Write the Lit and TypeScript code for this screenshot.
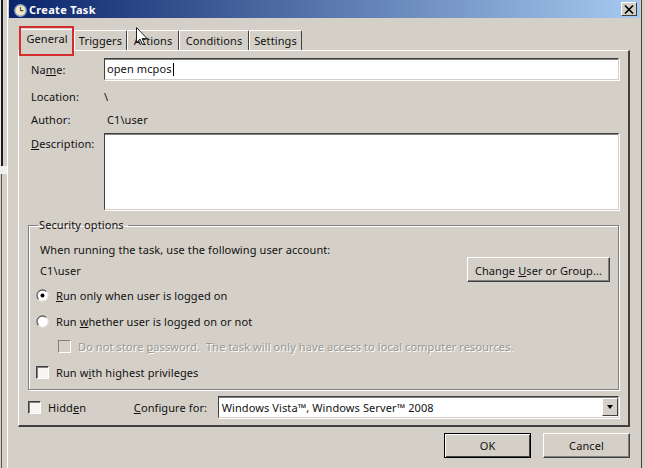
import { LitElement, html, css, svg } from "lit";
import { customElement } from "lit/decorators.js";

@customElement("app-root")
export class AppRoot extends LitElement {
  static styles = css`
    :host { display: block; width: 645px; height: 468px; overflow: hidden; background: #d4d0c8; font: 11px "Noto Sans", sans-serif; letter-spacing: 0.1px; color: #111; }
    * { box-sizing: border-box; }
    u { text-underline-offset: 1px; }
    .win { width: 645px; height: 468px; display: flex; position: relative; }
    .strip { width: 9px; flex: none; display: flex; flex-direction: column; }
    .s1 { height: 166px; background: linear-gradient(90deg, #e8e8e8 1px, #1c1c1c 1px, #1c1c1c 3px, #d4d0c8 3px, #d4d0c8 7px, #fff 7px, #fff 8px, #d4d0c8 8px); }
    .s2 { height: 8px; background: linear-gradient(90deg, #f0f0f0 7px, #fff 7px, #fff 8px, #d4d0c8 8px); }
    .s3 { flex: 1; background: linear-gradient(90deg, #d4d0c8 1px, #555 1px, #555 2px, #d4d0c8 2px, #d4d0c8 7px, #fff 7px, #fff 8px, #d4d0c8 8px); }
    .wrap { height: 468px; border-right: 1px solid #404040; padding-right: 1px; width: 633px; display: flex; flex-direction: column; }
    .title { height: 18px; background: linear-gradient(90deg, #0a246a, #a6caf0); color: #fff; font: bold 11px "Noto Sans", sans-serif; letter-spacing: 0.3px; display: flex; align-items: center; padding: 0 3px 0 5px; gap: 2px; }
    .title .t { flex: 1; }
    .title svg.clock { margin-top: 3px; }
    .close { width: 16px; height: 14px; background: #d4d0c8; border: 1px solid; border-color: #fff #404040 #404040 #fff; display: flex; align-items: center; justify-content: center; }
    .body { flex: 1; padding: 9px 10px 0 9px; display: flex; flex-direction: column; }
    .tabs { display: flex; height: 23px; padding-left: 2px; position: relative; align-items: flex-end; }
    .tab { height: 20px; padding: 2px 0 0; text-align: center; background: #d4d0c8; border: 1px solid; border-color: #fff #404040 transparent #fff; border-bottom: none; border-radius: 2px 2px 0 0; white-space: nowrap; line-height: 16px; flex: none; }
    .t1 { width: 53px; }
    .t2 { width: 52px; }
    .t3 { width: 70px; }
    .t4 { width: 53px; }
    .tab.on { height: 22px; width: 54px; margin-bottom: -1px; padding-top: 1px; z-index: 1; border-right-color: #808080; }
    .mark { position: absolute; left: 1px; top: -1px; width: 55px; height: 30px; border: 2px solid #d22c2c; z-index: 2; pointer-events: none; }
    .pane { width: 612px; height: 377px; border: 1px solid; border-color: #fff #404040 #404040 #fff; border-width: 1px 2px 2px 1px; padding: 7px 9px 0 9px; display: flex; flex-direction: column; }
    .row { display: flex; align-items: center; }
    .lbl { width: 76px; flex: none; padding-left: 3px; }
    .input { background: #fff; border: 1px solid; border-color: #404040 #d4d0c8 #d4d0c8 #404040; box-shadow: inset 0 1px 0 #808080, 1px 1px 0 #fff; }
    .name { width: 515px; height: 22px; padding: 0 2px; line-height: 18px; display: flex; align-items: center; }
    .caret { width: 1px; height: 13px; background: #000; margin-left: 1px; }
    .r1 { margin-bottom: 8px; }
    .r2 { height: 16px; margin-bottom: 7px; }
    .r3 { height: 16px; margin-bottom: 6px; }
    .desc { width: 515px; height: 77px; }
    .r4 { align-items: flex-start; margin-bottom: 8px; }
    .r4 .lbl { padding-top: 3px; }
    fieldset { margin: 0; width: 591px; height: 172px; padding: 0; border: 1px solid #808080; box-shadow: inset 1px 1px 0 #fff, 1px 1px 0 #fff; }
    legend { margin-left: 9px; padding: 0 4px 0 1px; line-height: 14px; }
    .in { padding: 10px 8px 0 11px; display: flex; flex-direction: column; }
    .when { height: 20px; }
    .acct { display: flex; justify-content: space-between; align-items: flex-start; height: 24px; }
    .acct span { padding-top: 1px; }
    .btn { background: #d4d0c8; border: 1px solid; border-color: #fff #404040 #404040 #fff; box-shadow: inset -1px -1px 0 #808080; display: flex; align-items: center; justify-content: center; }
    .change { width: 143px; height: 25px; margin-top: -5px; flex: none; }
    .radio, .check { display: flex; align-items: center; }
    .dot { width: 13px; height: 13px; flex: none; margin-right: 7px; }
    .box { width: 13px; height: 13px; flex: none; background: #f6f5f2; border: 1px solid; border-color: #404040 #fff #fff #404040; box-shadow: inset 1px 1px 0 #808080; }
    .rr { height: 16px; margin-left: -4px; }
    .m1 { margin-top: 1px; margin-bottom: 10px; }
    .m2 { margin-bottom: 9px; }
    .dis { color: #9a978f; text-shadow: 1px 1px 0 #fff; padding-left: 22px; height: 16px; margin-bottom: 10px; margin-left: -4px; }
    .dis .box { margin-right: 8px; background: #d4d0c8; border-color: #808080 #fff #fff #808080; box-shadow: none; }
    .check .box { margin-right: 7px; }
    .foot { display: flex; align-items: center; height: 22px; margin-top: 6px; }
    .foot .check { width: 106px; }
    .cfg { width: 84px; }
    .select { width: 402px; height: 22px; display: flex; align-items: center; padding-left: 3px; justify-content: space-between; }
    .arrow { width: 16px; height: 18px; background: #d4d0c8; border: 1px solid; border-color: #fff #404040 #404040 #fff; display: flex; align-items: center; justify-content: center; flex: none; }
    .tri { width: 0; height: 0; border: 3.5px solid transparent; border-top: 4px solid #000; border-bottom: none; }
    .actions { display: flex; justify-content: flex-end; gap: 12px; padding-top: 6px; }
    .act { width: 87px; height: 25px; }
    .ok { border: 1px solid #000; box-shadow: inset 1px 1px 0 #fff, inset -1px -1px 0 #404040; }
    .cursor { position: absolute; left: 136px; top: 27px; z-index: 3; pointer-events: none; }
  `;

  render() {
    const radio = (on: boolean) => html`<svg class="dot" viewBox="0 0 13 13"><circle cx="6.5" cy="6.5" r="5.5" fill="#fff"/><path d="M2.6 10.4a5.5 5.5 0 0 1 7.8-7.8" fill="none" stroke="#606060" stroke-width="1.3"/><path d="M2.6 10.4a5.5 5.5 0 0 0 7.8-7.8" fill="none" stroke="#eceae4" stroke-width="1.3"/>${on ? svg`<circle cx="6.5" cy="6.5" r="2" fill="#000"/>` : ""}</svg>`;
    return html`
      <div class="win">
        <div class="strip"><div class="s1"></div><div class="s2"></div><div class="s3"></div></div>
        <div class="wrap">
          <div class="title">
            <svg class="clock" width="13" height="13" viewBox="0 0 13 13"><circle cx="6.5" cy="6.5" r="5.7" fill="#f3e7c4" stroke="#8fa3c0" stroke-width="1.4"/><path d="M6.5 3v3.7h3" fill="none" stroke="#555" stroke-width="1.2"/></svg>
            <span class="t">Create Task</span>
            <span class="close"><svg width="10" height="9" viewBox="0 0 10 9"><path d="M1 0.5l8 8M9 0.5l-8 8" stroke="#000" stroke-width="1.6"/></svg></span>
          </div>
          <div class="body">
            <div class="tabs">
              <div class="mark"></div>
              <div class="tab on">General</div>
              <div class="tab t1">Triggers</div>
              <div class="tab t2">Actions</div>
              <div class="tab t3">Conditions</div>
              <div class="tab t4">Settings</div>
            </div>
            <div class="pane">
              <div class="row r1"><span class="lbl">Na<u>m</u>e:</span><div class="input name">open mcpos<i class="caret"></i></div></div>
              <div class="row r2"><span class="lbl">Location:</span><span>\\</span></div>
              <div class="row r3"><span class="lbl">Author:</span><span>&nbsp;C1\\user</span></div>
              <div class="row r4"><span class="lbl"><u>D</u>escription:</span><div class="input desc"></div></div>
              <fieldset>
                <legend>Security options</legend>
                <div class="in">
                  <div class="when">When running the task, use the following user account:</div>
                  <div class="acct"><span>C1\\user</span><div class="btn change"><span>Change <u>U</u>ser or Group...</span></div></div>
                  <div class="radio rr m1">${radio(true)}<span><u>R</u>un only when user is logged on</span></div>
                  <div class="radio rr m2">${radio(false)}<span>Run <u>w</u>hether user is logged on or not</span></div>
                  <div class="check dis"><div class="box"></div><span>Do not store <u>p</u>assword.&nbsp; The task will only have access to local computer resources.</span></div>
                  <div class="check rr"><div class="box"></div><span>Run w<u>i</u>th highest privileges</span></div>
                </div>
              </fieldset>
              <div class="foot">
                <div class="check"><div class="box"></div><span>Hidd<u>e</u>n</span></div>
                <span class="cfg"><u>C</u>onfigure for:</span>
                <div class="input select"><span>Windows Vista™, Windows Server™ 2008</span><div class="arrow"><div class="tri"></div></div></div>
              </div>
            </div>
            <div class="actions">
              <div class="btn act ok">OK</div>
              <div class="btn act">Cancel</div>
            </div>
          </div>
        </div>
        <svg class="cursor" width="13" height="19" viewBox="0 0 13 19"><path d="M0.5 0.5v15l3.5-3.5 2.5 5.5 2-1-2.5-5h5z" fill="#fff" stroke="#222" stroke-width="1"/></svg>
      </div>
    `;
  }
}
